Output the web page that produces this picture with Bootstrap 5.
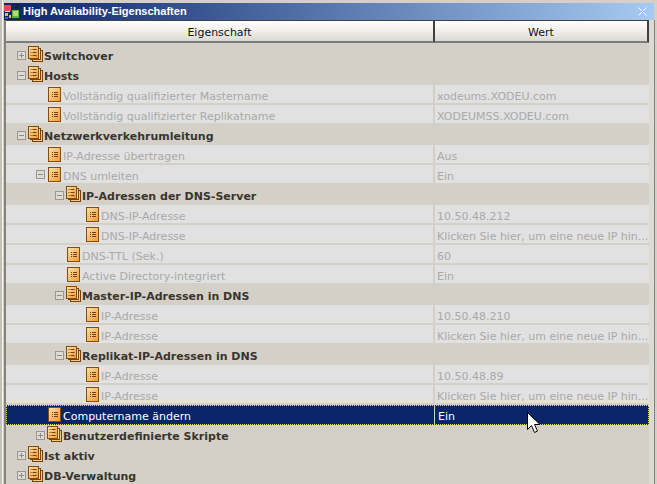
<!DOCTYPE html>
<html lang="de"><head><meta charset="utf-8"><title>High Availability-Eigenschaften</title>
<link href="https://cdn.jsdelivr.net/npm/bootstrap@5.3.0/dist/css/bootstrap.min.css" rel="stylesheet">
<style>
html,body{width:657px;height:484px;overflow:hidden;margin:0;background:#d4d0c8}
body{font-family:"DejaVu Sans","Liberation Sans",sans-serif;font-size:11px;line-height:1;color:#000;position:relative}
.win{height:484px;padding:3px 0 0 4px;box-shadow:inset 2px 0 0 #c4c1b9,inset 3px 0 0 #f4f3f0}
.ttl{height:17px;margin-right:3px;background:linear-gradient(90deg,#0a246a,#a6caf0);color:#fff;font-family:"Liberation Sans",sans-serif;font-weight:700;padding:0 7px 0 0}
.ttl span{font-size:11px;margin-left:3px}
.pane{margin:0 8px 0 0;border-left:2px solid #85827b;height:464px}
.hd{height:25px}
.hc{background:linear-gradient(#fff,#f4f3f0 40%,#dcd9d2);border-top:1px solid #404040;border-right:2px solid #404040;border-bottom:2px solid #7c7c7c;display:flex;align-items:center;justify-content:center;color:#111;height:23px;padding-top:2px}
.c1{width:429px;flex:none}
.c2{flex:1 1 auto;min-width:0}
.rw{height:20px;align-items:center;white-space:nowrap;overflow:hidden;padding-top:2px}
.grp{font-weight:700;color:#38352f}
.lf{background:#e1e1e1;color:#a9a9a9;border-bottom:2px solid #d4d0c8;padding-top:0}
.lf .c1,.lf .c2{height:18px;padding-top:4px;display:flex;align-items:center}
.lf .c1{border-right:2px solid #d4d0c8}
.lf .c2{padding-left:2px}
.sel{background:#0a246a;color:#fff;outline:1px dotted #f4d27a;outline-offset:-1px;padding-top:0}
.sel .c1,.sel .c2{height:20px;padding-top:2px;display:flex;align-items:center}
.sel .c1{border-right:1px solid #d4d0c8}
.sel .c2{padding-left:3px}
.nm{display:flex;align-items:center}
.i0{padding-left:11px}.i1{padding-left:30px}.i2{padding-left:49px}
.lfi0{padding-left:42px}.lfi1{padding-left:61px}.lfi2{padding-left:80px}
.xp{width:9px;height:9px;flex:none;margin:-2px 2px 0 0}
.lf .xp{margin:-4px 3px 0 0}
.ic{width:15px;height:16px;flex:none;margin:-4px 1px 0 0}
.il{width:13px;height:15px;flex:none;margin:-4px 2px 0 0}
.ptr{position:absolute;left:526px;top:411px;width:16px;height:24px}
.sb{position:absolute;right:2px;top:20px;bottom:0;width:6px;background:#dedbd5;border-right:1px solid #85827b}
</style></head><body>
<svg width="0" height="0" class="position-absolute">
<defs>
<linearGradient id="g" x1="0" y1="0" x2="1" y2="1"><stop offset="0" stop-color="#ffe2b0"/><stop offset="1" stop-color="#f09a30"/></linearGradient>
<symbol id="plus" viewBox="0 0 9 9"><rect x=".5" y=".5" width="8" height="8" fill="#dedbd4" stroke="#9a9790"/><path d="M2 4.500h5M4.500 2v5" stroke="#8a8a8a" fill="none"/></symbol>
<symbol id="minus" viewBox="0 0 9 9"><rect x=".5" y=".5" width="8" height="8" fill="#dedbd4" stroke="#9a9790"/><path d="M2 4.500h5" stroke="#8a8a8a" fill="none"/></symbol>
<symbol id="leaf" viewBox="0 0 13 15"><rect x=".5" y=".5" width="12" height="14" fill="url(#g)" stroke="#8a4a08"/><path d="M4 5.500h1M6 5.500h4M4 7.500h1M6 7.500h4M4 9.500h1M6 9.500h4" stroke="#7a3f05" fill="none"/></symbol>
<symbol id="stack" viewBox="0 0 15 16"><rect x="4.500" y="4.500" width="10" height="11" fill="#f6c98a" stroke="#7a4206"/><rect x="2.500" y="2.500" width="10" height="11" fill="#fbd9a6" stroke="#7a4206"/><rect x=".5" y=".5" width="10" height="12" fill="url(#g)" stroke="#8a4a08"/><path d="M2.500 3.500h1M4.500 3.500h4M2.500 6.500h1M4.500 6.500h4M2.500 9.500h1M4.500 9.500h4" stroke="#7a3f05" fill="none"/></symbol>
</defs></svg>
<div class="win">
<div class="ttl d-flex align-items-center justify-content-between">
<div class="d-flex align-items-center"><svg width="16" height="16" viewBox="0 0 16 16"><rect x="0" y="1" width="7" height="6" fill="#f0485a"/><rect x="1" y="7" width="5" height="1" fill="#d8d8e8"/><path d="M12 1h3v3M11 3l3 1" stroke="#102020" fill="none"/><rect x="7.500" y="5.500" width="8" height="9" fill="#58b048" stroke="#183818"/><rect x="9" y="7" width="5" height="5" fill="#a8e070"/><rect x="1" y="9" width="3" height="3" fill="#e8c040"/><rect x="5" y="11" width="2" height="3" fill="#e8c040"/><rect x="1" y="13" width="3" height="2" fill="#4060c0"/></svg><span>High Availability-Eigenschaften</span></div>
<svg width="9" height="9" viewBox="0 0 9 9"><path d="M.5.500l8 8M8.500.500l-8 8" stroke="#fff" fill="none"/></svg>
</div>
<div class="pane">
<div class="hd d-flex"><div class="hc c1">Eigenschaft</div><div class="hc c2">Wert</div></div>
<div class="rw d-flex grp i0"><svg class="xp"><use href="#plus"/></svg><svg class="ic"><use href="#stack"/></svg>Switchover</div>
<div class="rw d-flex grp i0"><svg class="xp"><use href="#minus"/></svg><svg class="ic"><use href="#stack"/></svg>Hosts</div>
<div class="rw d-flex lf"><div class="c1 nm lfi0"><svg class="il"><use href="#leaf"/></svg>Vollständig qualifizierter Mastername</div><div class="c2">xodeums.XODEU.com</div></div>
<div class="rw d-flex lf"><div class="c1 nm lfi0"><svg class="il"><use href="#leaf"/></svg>Vollständig qualifizierter Replikatname</div><div class="c2">XODEUMSS.XODEU.com</div></div>
<div class="rw d-flex grp i0"><svg class="xp"><use href="#minus"/></svg><svg class="ic"><use href="#stack"/></svg>Netzwerkverkehrumleitung</div>
<div class="rw d-flex lf"><div class="c1 nm lfi0"><svg class="il"><use href="#leaf"/></svg>IP-Adresse übertragen</div><div class="c2">Aus</div></div>
<div class="rw d-flex lf"><div class="c1 nm i1"><svg class="xp"><use href="#minus"/></svg><svg class="il"><use href="#leaf"/></svg>DNS umleiten</div><div class="c2">Ein</div></div>
<div class="rw d-flex grp i2"><svg class="xp"><use href="#minus"/></svg><svg class="ic"><use href="#stack"/></svg>IP-Adressen der DNS-Server</div>
<div class="rw d-flex lf"><div class="c1 nm lfi2"><svg class="il"><use href="#leaf"/></svg>DNS-IP-Adresse</div><div class="c2">10.50.48.212</div></div>
<div class="rw d-flex lf"><div class="c1 nm lfi2"><svg class="il"><use href="#leaf"/></svg>DNS-IP-Adresse</div><div class="c2">Klicken Sie hier, um eine neue IP hin...</div></div>
<div class="rw d-flex lf"><div class="c1 nm lfi1"><svg class="il"><use href="#leaf"/></svg>DNS-TTL (Sek.)</div><div class="c2">60</div></div>
<div class="rw d-flex lf"><div class="c1 nm lfi1"><svg class="il"><use href="#leaf"/></svg>Active Directory-integriert</div><div class="c2">Ein</div></div>
<div class="rw d-flex grp i2"><svg class="xp"><use href="#minus"/></svg><svg class="ic"><use href="#stack"/></svg>Master-IP-Adressen in DNS</div>
<div class="rw d-flex lf"><div class="c1 nm lfi2"><svg class="il"><use href="#leaf"/></svg>IP-Adresse</div><div class="c2">10.50.48.210</div></div>
<div class="rw d-flex lf"><div class="c1 nm lfi2"><svg class="il"><use href="#leaf"/></svg>IP-Adresse</div><div class="c2">Klicken Sie hier, um eine neue IP hin...</div></div>
<div class="rw d-flex grp i2"><svg class="xp"><use href="#minus"/></svg><svg class="ic"><use href="#stack"/></svg>Replikat-IP-Adressen in DNS</div>
<div class="rw d-flex lf"><div class="c1 nm lfi2"><svg class="il"><use href="#leaf"/></svg>IP-Adresse</div><div class="c2">10.50.48.89</div></div>
<div class="rw d-flex lf"><div class="c1 nm lfi2"><svg class="il"><use href="#leaf"/></svg>IP-Adresse</div><div class="c2">Klicken Sie hier, um eine neue IP hin...</div></div>
<div class="rw d-flex sel"><div class="c1 nm lfi0"><svg class="il"><use href="#leaf"/></svg>Computername ändern</div><div class="c2">Ein</div></div>
<div class="rw d-flex grp i1"><svg class="xp"><use href="#plus"/></svg><svg class="ic"><use href="#stack"/></svg>Benutzerdefinierte Skripte</div>
<div class="rw d-flex grp i0"><svg class="xp"><use href="#plus"/></svg><svg class="ic"><use href="#stack"/></svg>Ist aktiv</div>
<div class="rw d-flex grp i0"><svg class="xp"><use href="#plus"/></svg><svg class="ic"><use href="#stack"/></svg>DB-Verwaltung</div>
</div>
</div>
<div class="sb"></div>
<svg class="ptr" viewBox="0 0 16 24"><path d="M1.500 1.500v17l4-4 3 7 3-1.500-3-6.500h5.500z" fill="#fff" stroke="#000"/></svg>
</body></html>
